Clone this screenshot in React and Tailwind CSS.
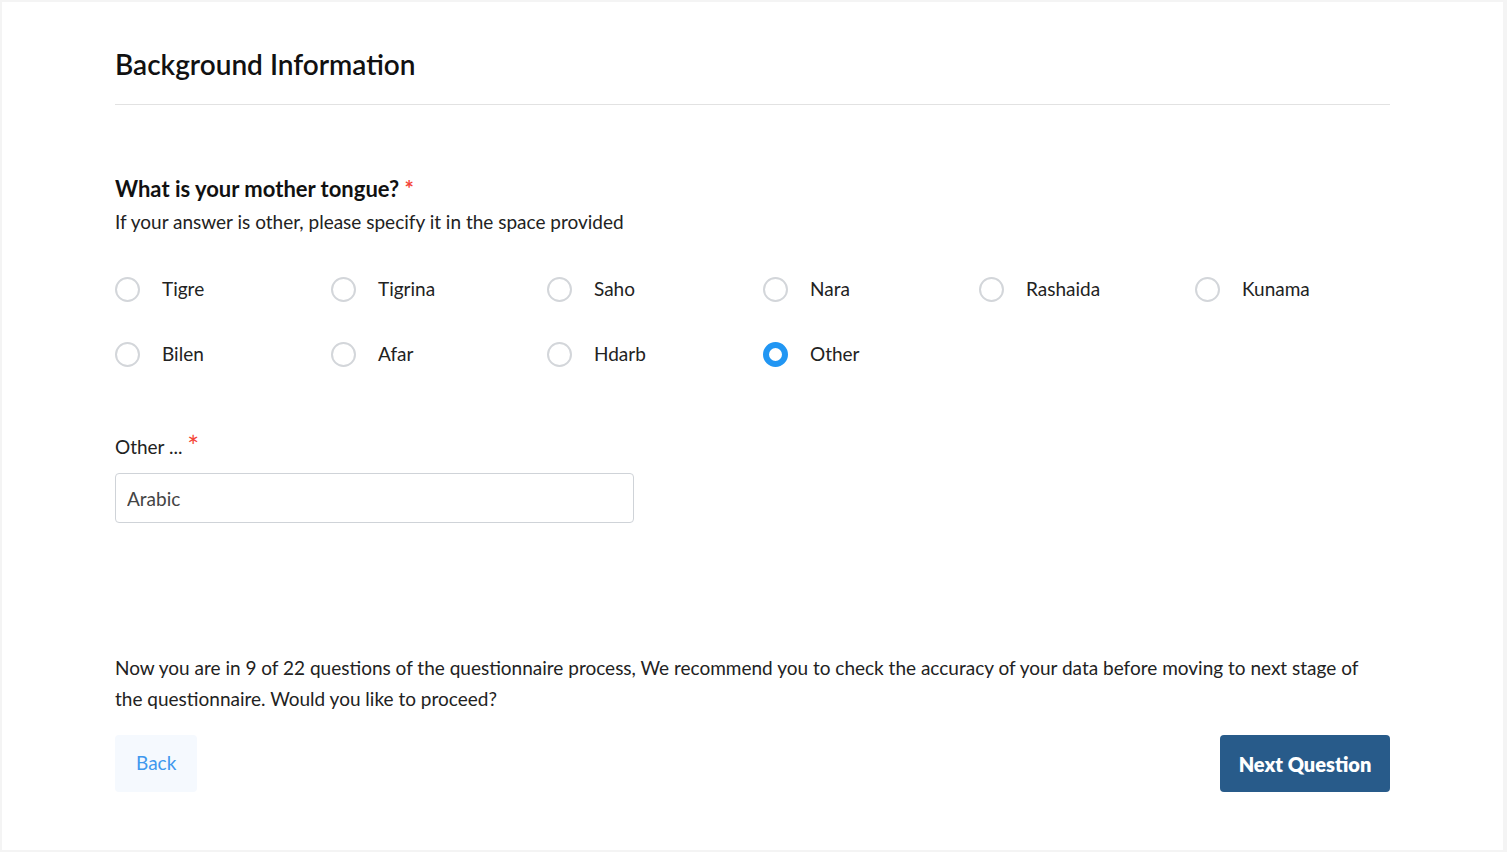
import React, { useState } from "react";

const options = [
  "Tigre",
  "Tigrina",
  "Saho",
  "Nara",
  "Rashaida",
  "Kunama",
  "Bilen",
  "Afar",
  "Hdarb",
  "Other",
];

export default function App() {
  const [selected, setSelected] = useState("Other");
  const [other, setOther] = useState("Arabic");

  return (
    <div className="min-h-screen bg-[#f4f4f4] p-[2px] font-['Lato',sans-serif] text-[#111]">
      <div className="bg-white h-[848px] w-[1501px] px-[113px] pt-[42px]">
        <h1 className="text-[28px] leading-[40px] font-semibold pb-[20px] border-b border-[#e2e2e2]">
          Background Information
        </h1>

        <div className="mt-[70px]">
          <h2 className="text-[22px] leading-[28px] font-bold">
            What is your mother tongue? <span className="text-[#f44336]">*</span>
          </h2>
          <p className="text-[19px] leading-[26px] mt-[6px] text-[#222]">
            If your answer is other, please specify it in the space provided
          </p>
        </div>

        <div className="mt-[34px] grid grid-cols-[repeat(6,216px)] gap-y-[25px]">
          {options.map((opt) => (
            <label
              key={opt}
              className="flex items-center h-[40px] cursor-pointer"
              onClick={() => setSelected(opt)}
            >
              <span
                className={`w-[25px] h-[25px] rounded-full box-border ${
                  selected === opt
                    ? "border-[6px] border-[#2196f3]"
                    : "border-2 border-[#d3d6da]"
                }`}
              ></span>
              <span className="ml-[22px] text-[19px] text-[#222]">{opt}</span>
            </label>
          ))}
        </div>

        <div className="mt-[59px]">
          <label className="block text-[19px] leading-[28px] text-[#222]">
            Other ...{" "}
            <span className="text-[#f44336] text-[28px] leading-[0] relative top-[3px]">*</span>
          </label>
          <input
            value={other}
            onChange={(e) => setOther(e.target.value)}
            className="block mt-[12px] w-[519px] h-[50px] border border-[#cfd3d8] rounded-[4px] px-[11px] text-[19px] text-[#444] outline-none"
          />
        </div>

        <p className="mt-[129px] text-[19px] leading-[31px] text-[#222]">
          Now you are in 9 of 22 questions of the questionnaire process, We recommend you to check the
          accuracy of your data before moving to next stage of the questionnaire. Would you like to
          proceed?
        </p>

        <div className="mt-[21px] flex justify-between">
          <button className="h-[57px] px-[21px] bg-[#f5f9fe] rounded-[4px] text-[19px] text-[#3f98ee]">
            Back
          </button>
          <button className="h-[57px] w-[170px] bg-[#285b8a] rounded-[4px] text-[20px] font-extrabold text-white">
            Next Question
          </button>
        </div>
      </div>
    </div>
  );
}
